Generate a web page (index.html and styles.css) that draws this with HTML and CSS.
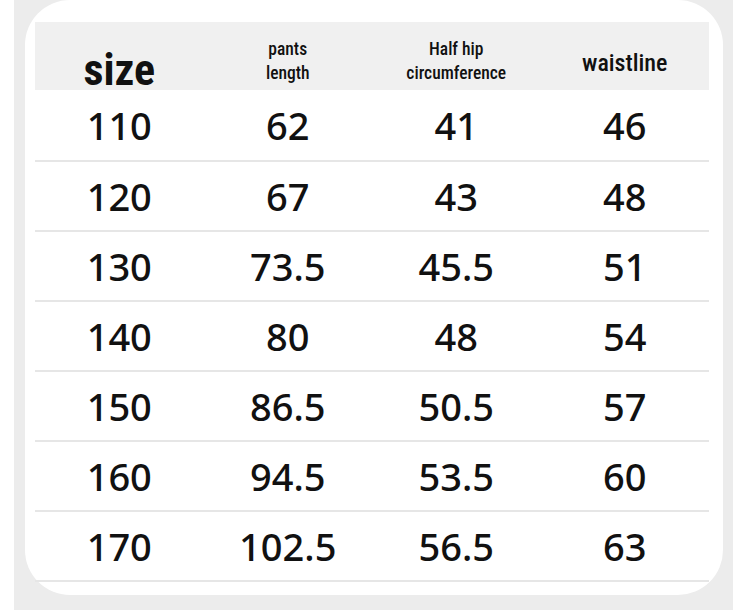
FILE: index.html
```html
<!DOCTYPE html>
<html>
<head>
<meta charset="utf-8">
<link rel="stylesheet" href="styles.css">
</head>
<body>
<div class="frame">
  <div class="card">
    <div class="table">
      <div class="row head">
        <div class="cell h-size">size</div>
        <div class="cell h-two">pants<br>length</div>
        <div class="cell h-two">Half hip<br>circumference</div>
        <div class="cell h-waist">waistline</div>
      </div>
      <div class="row first"><div class="cell">110</div><div class="cell">62</div><div class="cell">41</div><div class="cell">46</div></div>
      <div class="row"><div class="cell">120</div><div class="cell">67</div><div class="cell">43</div><div class="cell">48</div></div>
      <div class="row"><div class="cell">130</div><div class="cell">73.5</div><div class="cell">45.5</div><div class="cell">51</div></div>
      <div class="row"><div class="cell">140</div><div class="cell">80</div><div class="cell">48</div><div class="cell">54</div></div>
      <div class="row"><div class="cell">150</div><div class="cell">86.5</div><div class="cell">50.5</div><div class="cell">57</div></div>
      <div class="row"><div class="cell">160</div><div class="cell">94.5</div><div class="cell">53.5</div><div class="cell">60</div></div>
      <div class="row"><div class="cell">170</div><div class="cell">102.5</div><div class="cell">56.5</div><div class="cell">63</div></div>
    </div>
  </div>
</div>
</body>
</html>
```
FILE: styles.css
```css
html, body {
  margin: 0;
  padding: 0;
  background: #ffffff;
}
.frame {
  margin-left: 14px;
  width: 719px;
  height: 610px;
  background: #ececec;
  padding-left: 11px;
  box-sizing: border-box;
  overflow: hidden;
}
.card {
  width: 698px;
  height: 595px;
  background: #ffffff;
  border-radius: 45px;
  box-sizing: border-box;
  padding: 22px 14px 0 10px;
}
.table {
  width: 674px;
  display: flex;
  flex-direction: column;
}
.row {
  display: grid;
  grid-template-columns: repeat(4, 1fr);
  height: 70px;
  box-sizing: border-box;
  border-bottom: 2px solid #e6e6e6;
}
.row.first {
  height: 72px;
}
.row.head {
  height: 68px;
  border-bottom: none;
  background: #f0f0f0;
}
.cell {
  display: flex;
  align-items: center;
  justify-content: center;
  text-align: center;
  font-family: "Noto Sans", "Open Sans", sans-serif;
  font-weight: 500;
  font-size: 38px;
  color: #111111;
}
.head .cell {
  font-family: "Roboto Condensed", "Liberation Sans Narrow", "DejaVu Sans Condensed", sans-serif;
  font-stretch: condensed;
  padding-top: 4px;
}
.head .h-size {
  font-size: 44px;
  font-weight: 700;
  padding-top: 22px;
}
.h-two {
  font-size: 17.5px;
  font-weight: 500;
  line-height: 24px;
}
.head .h-waist {
  font-size: 24px;
  font-weight: 500;
  padding-top: 8px;
}
```
